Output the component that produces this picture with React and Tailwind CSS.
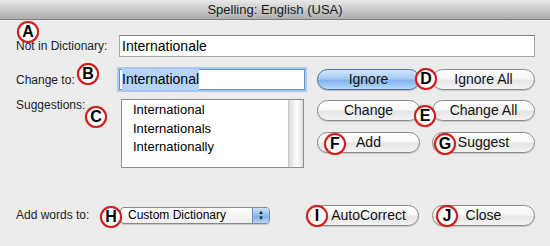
import React from "react";

const btn =
  "h-[21px] rounded-full border border-[#8a8a8a] bg-[linear-gradient(to_bottom,#ffffff_0%,#f7f7f7_45%,#e6e6e6_55%,#f3f3f3_100%)] shadow-[0_1px_1px_rgba(0,0,0,0.15)] flex items-center justify-center text-[14px] text-[#111]";

function Badge({ letter, x, y }) {
  return (
    <div
      className="absolute w-[22px] h-[22px] rounded-full border-2 border-[#d81b1b] bg-white flex items-center justify-center text-[16px] font-bold text-black leading-none shadow-[0_0_1px_rgba(0,0,0,0.4)]"
      style={{ left: x - 11, top: y - 11 }}
    >
      {letter}
    </div>
  );
}

export default function App() {
  return (
    <div className="relative w-[550px] h-[246px] overflow-hidden bg-[#ececec] font-['Liberation_Sans',Arial,sans-serif] text-[#1a1a1a]">
      <div className="h-[20px] border-b border-[#7f7f7f] bg-[linear-gradient(to_bottom,#e8e8e8,#adadad)] flex items-center justify-center text-[13px] text-[#1a1a1a]">
        Spelling: English (USA)
      </div>

      <div className="pl-[16px] pr-[15px] pt-[15px]">
        <div className="flex items-center h-[22px]">
          <div className="w-[103px] text-[12px] text-[#222]">Not in Dictionary:</div>
          <div className="flex-1 h-[22px] bg-white border border-[#a5a5a5] border-t-[#7c7c7c] flex items-center pl-[2px] text-[14px] text-black">
            Internationale
          </div>
        </div>

        <div className="flex mt-[12px]">
          <div className="w-[289px]">
            <div className="flex items-center h-[21px]">
              <div className="w-[103px] text-[12px] text-[#222]">Change to:</div>
              <div className="w-[186px] h-[21px] bg-white border border-[#6b93cc] shadow-[0_0_0_2px_#a9c7ef] flex items-center pl-[2px] text-[14px] text-black">
                <span className="bg-[#b5d3fb]">International</span>
              </div>
            </div>
            <div className="flex items-start mt-[9px]">
              <div className="w-[105px] text-[12px] text-[#222] leading-none">Suggestions:</div>
              <div className="w-[183px] h-[69px] bg-white border border-[#8e8e8e] flex">
                <div className="flex-1 pl-[11px] pt-[1px] text-[13px] text-black leading-[18.5px]">
                  <div>International</div>
                  <div>Internationals</div>
                  <div>Internationally</div>
                </div>
                <div className="w-[15px] border-l border-[#c8c8c8] bg-[linear-gradient(to_right,#d9d9d9,#f6f6f6_40%,#ffffff_60%,#dcdcdc)]" />
              </div>
            </div>
          </div>

          <div className="ml-[12px] flex flex-col">
            <div className="flex gap-[12px]">
              <div className="w-[103px] h-[21px] rounded-full border border-[#4e6fa3] bg-[linear-gradient(to_bottom,#d3e6fc_0%,#a6cbf4_45%,#80b4ee_55%,#b9dbfc_100%)] shadow-[0_1px_1px_rgba(0,0,0,0.2)] flex items-center justify-center text-[14px] text-[#111]">
                Ignore
              </div>
              <div className={`${btn} w-[103px]`}>Ignore All</div>
            </div>
            <div className="flex gap-[12px] mt-[10px]">
              <div className={`${btn} w-[103px]`}>Change</div>
              <div className={`${btn} w-[103px]`}>Change All</div>
            </div>
            <div className="flex gap-[12px] mt-[11px]">
              <div className={`${btn} w-[103px]`}>Add</div>
              <div className={`${btn} w-[103px]`}>Suggest</div>
            </div>
          </div>
        </div>

        <div className="flex items-center h-[20px] mt-[37px]">
          <div className="w-[104px] text-[12px] text-[#222]">Add words to:</div>
          <div className="w-[150px] h-[17px] rounded-[4px] border border-[#8a8a8a] bg-[linear-gradient(to_bottom,#ffffff,#eeeeee)] flex items-center overflow-hidden shadow-[0_1px_1px_rgba(0,0,0,0.15)]">
            <div className="flex-1 pl-[7px] text-[12px] text-black">Custom Dictionary</div>
            <div className="w-[17px] h-full border-l border-[#6b86b0] bg-[linear-gradient(to_bottom,#cfe3fb,#8dbcf0_50%,#78aeea_51%,#b4d6fa)] flex flex-col items-center justify-center text-[6px] leading-[6px] text-[#222]">
              <span>▲</span>
              <span>▼</span>
            </div>
          </div>
          <div className={`${btn} ml-[43px] w-[106px] h-[20px]`}>
            <span className="pl-[5px]">AutoCorrect</span>
          </div>
          <div className={`${btn} ml-[13px] w-[103px] h-[20px]`}>
            <span>Close</span>
          </div>
        </div>
      </div>

      <Badge letter="A" x={28} y={32} />
      <Badge letter="B" x={88} y={74} />
      <Badge letter="C" x={96} y={117} />
      <Badge letter="D" x={426} y={79} />
      <Badge letter="E" x={425} y={116} />
      <Badge letter="F" x={335} y={144} />
      <Badge letter="G" x={445} y={144} />
      <Badge letter="H" x={111} y={217} />
      <Badge letter="I" x={317} y={216} />
      <Badge letter="J" x={447} y={216} />
    </div>
  );
}
